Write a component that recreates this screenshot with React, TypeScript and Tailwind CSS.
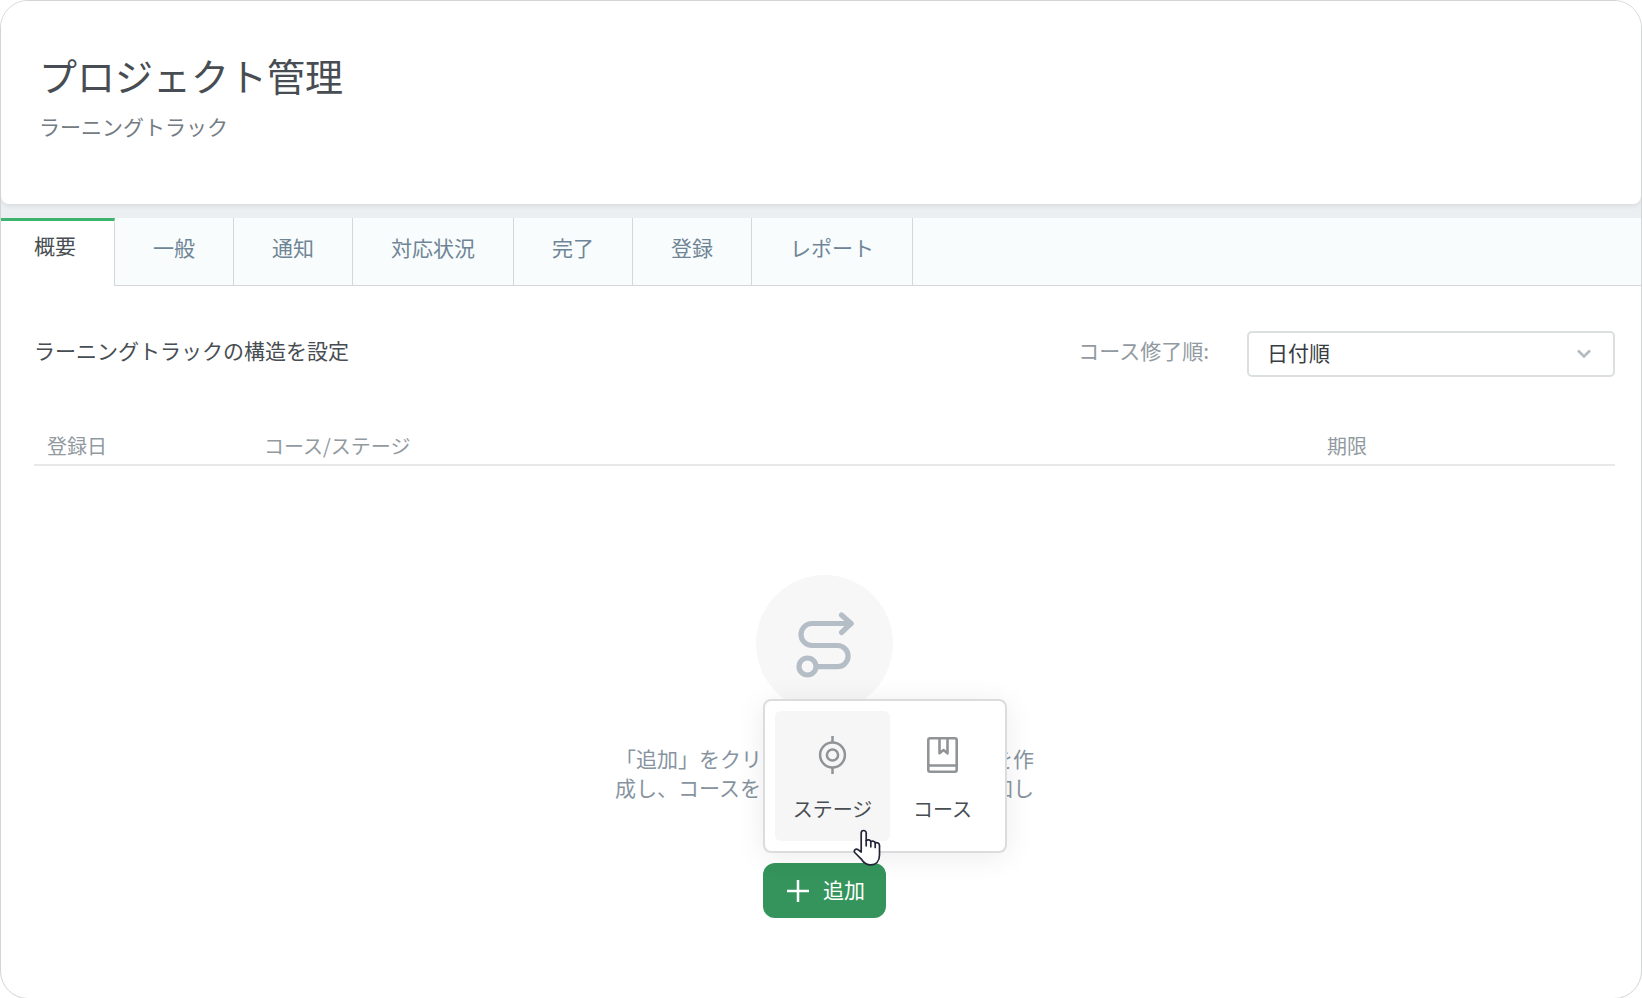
import React, { useState } from 'react'
import clsx from 'clsx'

const TABS = ['概要', '一般', '通知', '対応状況', '完了', '登録', 'レポート']

const RouteIcon: React.FC = () => (
  <svg
    viewBox="0 0 137 137"
    className="h-[137px] w-[137px]"
    fill="none"
    stroke="#b5bdc6"
    strokeWidth="5.2"
    strokeLinecap="round"
    strokeLinejoin="round"
    aria-hidden="true"
  >
    <path d="M95 48.500H56a11 11 0 0 0 0 22H81.500a10.600 10.600 0 0 1 0 21.200H60.500" />
    <path d="M85.500 40l9.500 8.500l-9.500 9" />
    <path d="M88 44l6 4.500l-6 4.500z" fill="#b5bdc6" stroke="none" />
    <circle cx="51.500" cy="91.500" r="8.500" />
  </svg>
)

const StageIcon: React.FC = () => (
  <svg viewBox="0 0 38 38" className="h-[38px] w-[38px]" fill="none" stroke="#909497" strokeWidth="2.500" aria-hidden="true">
    <circle cx="18.500" cy="19" r="12.400" />
    <circle cx="18.500" cy="19" r="5.600" />
    <path d="M18.500 0v7M18.500 31v7" />
  </svg>
)

const CourseIcon: React.FC = () => (
  <svg
    viewBox="0 0 38 38"
    className="h-[38px] w-[38px]"
    fill="none"
    stroke="#909497"
    strokeWidth="2.600"
    strokeLinejoin="round"
    aria-hidden="true"
  >
    <rect x="4.300" y="2.300" width="28.400" height="33.400" rx="2" />
    <path d="M4.300 29.500h28.400M15.500 2.300v15l4-3.300l4 3.300v-15" />
  </svg>
)

const PlusIcon: React.FC = () => (
  <svg viewBox="0 0 22 22" className="h-[22px] w-[22px]" stroke="currentColor" strokeWidth="2.500" aria-hidden="true">
    <path d="M11 0v22M0 11h22" />
  </svg>
)

const ChevronIcon: React.FC = () => (
  <svg
    viewBox="0 0 14 10"
    className="pointer-events-none absolute right-6 top-[18px] h-[10px] w-[14px]"
    fill="none"
    stroke="#b3bac0"
    strokeWidth="2.500"
    aria-hidden="true"
  >
    <path d="M1 1.500l6 6l6-6" />
  </svg>
)

const HandCursor: React.FC = () => (
  <svg
    viewBox="0 0 28 37"
    className="pointer-events-none absolute left-[88px] top-[128px] h-[37px] w-[28px]"
    fill="#fff"
    stroke="#25253a"
    strokeWidth="1.700"
    strokeLinejoin="round"
    strokeLinecap="round"
    aria-hidden="true"
  >
    <path d="M8.200 23V4a2.500 2.500 0 0 1 5 0v7.500c1.500-1 4-.8 4.600 1c1.500-.8 4-.3 4.400 1.400c1.900-.6 4.300.1 4.300 2.600V26c0 6-3.500 9.800-8.800 9.800c-4.200 0-6.700-1.600-8.900-5.100L1.700 23.500c-1.200-2.300 1-4.200 3.300-2.900z" />
    <path d="M13.200 11.500v5.300M17.800 12.500v5.300M22.200 14v4.500" fill="none" />
  </svg>
)

const AddMenu: React.FC = () => (
  <div
    role="menu"
    className="absolute bottom-full left-0 mb-[10px] flex rounded-lg border-2 border-[#dadcdd] bg-white p-[10px] text-xl leading-7 text-[#474d52] shadow-[0_4px_30px_rgba(0,0,0,0.08)]"
  >
    <button type="button" role="menuitem" className="flex w-[115px] flex-col items-center rounded-md bg-[#f6f6f6] pt-[25px] pb-[18px]">
      <StageIcon />
      <span className="mt-[21px]">ステージ</span>
    </button>
    <button type="button" role="menuitem" className="flex w-[105px] flex-col items-center rounded-md pt-[25px] pb-[18px]">
      <CourseIcon />
      <span className="mt-[21px]">コース</span>
    </button>
    <HandCursor />
  </div>
)

export default function App() {
  const [activeTab, setActiveTab] = useState('概要')
  const [menuOpen, setMenuOpen] = useState(true)

  return (
    <div
      lang="ja"
      className="flex min-h-screen flex-col overflow-hidden rounded-[28px] border border-[#d3d4d5] bg-white font-['Noto_Sans_CJK_JP',sans-serif] font-normal"
    >
      <div className="bg-[#ebeff1] pb-[14px]">
        <header className="rounded-b-lg bg-white px-[38px] pt-[50px] pb-[62px] shadow-[0_2px_5px_rgba(0,0,0,0.08)]">
          <h1 className="text-[38px] leading-[48px] text-[#474d52]">プロジェクト管理</h1>
          <p className="mt-[12px] text-[21px] leading-[31px] text-[#747c83]">ラーニングトラック</p>
        </header>
      </div>

      <nav role="tablist" className="flex bg-[#f8fcfd] text-[21px] leading-[30px]">
        {TABS.map(tab => {
          const active = tab === activeTab
          return (
            <button
              key={tab}
              type="button"
              role="tab"
              aria-selected={active}
              onClick={() => setActiveTab(tab)}
              className={clsx(
                'h-[68px] border-r border-[#d5d8d9] pr-[38px]',
                active
                  ? 'border-t-[3px] border-t-[#3cb46e] bg-white pb-[18px] pl-[33px] text-[#474d52]'
                  : 'border-b pb-[10px] pl-[38px] text-[#6f8596]'
              )}
            >
              {tab}
            </button>
          )
        })}
        <div className="flex-1 border-b border-[#d5d8d9]" />
      </nav>

      <main className="pt-[45px] pr-[26px] pb-20 pl-[33px]">
        <div className="flex items-center justify-between text-[21px] leading-[30px]">
          <h2 className="pb-2 text-[#474d52]">ラーニングトラックの構造を設定</h2>
          <div className="flex items-center">
            <label htmlFor="completion-order" className="mr-[38px] pb-2 text-[#929aa1]">
              コース修了順:
            </label>
            <div className="relative w-[368px]">
              <select
                id="completion-order"
                className="h-[46px] w-full appearance-none rounded-[5px] border-2 border-[#dcdfe0] bg-white pb-1 pl-[18px] text-[#373c41]"
              >
                <option>日付順</option>
                <option>登録順</option>
              </select>
              <ChevronIcon />
            </div>
          </div>
        </div>

        <table className="mt-[55px] w-full table-fixed text-left text-xl leading-7 text-[#929aa1]">
          <thead>
            <tr className="border-b-2 border-[#e6e8e9]">
              <th className="w-[217px] pb-1 pl-[13px] font-normal">登録日</th>
              <th className="pb-1 pl-[13px] font-normal">コース/ステージ</th>
              <th className="w-[301px] pb-1 pl-[13px] font-normal">期限</th>
            </tr>
          </thead>
        </table>

        <section className="mt-[109px] flex flex-col items-center">
          <div className="rounded-full bg-[#f7f7f7]">
            <RouteIcon />
          </div>
          <p className="mt-[32px] text-center text-[21px] leading-[29px] text-[#87949f]">
            「追加」をクリックして新しいステージを作
            <br />
            成し、コースをラーニングトラックに追加し
          </p>
          <div className="relative mt-[61px]">
            <button
              type="button"
              aria-haspopup="menu"
              aria-expanded={menuOpen}
              onClick={() => setMenuOpen(!menuOpen)}
              className="flex h-[55px] items-center gap-[14px] rounded-xl bg-[#34945b] pr-[21px] pl-6 text-[21px] text-white"
            >
              <PlusIcon />
              <span className="pb-0.5">追加</span>
            </button>
            {menuOpen && <AddMenu />}
          </div>
        </section>
      </main>
    </div>
  )
}
